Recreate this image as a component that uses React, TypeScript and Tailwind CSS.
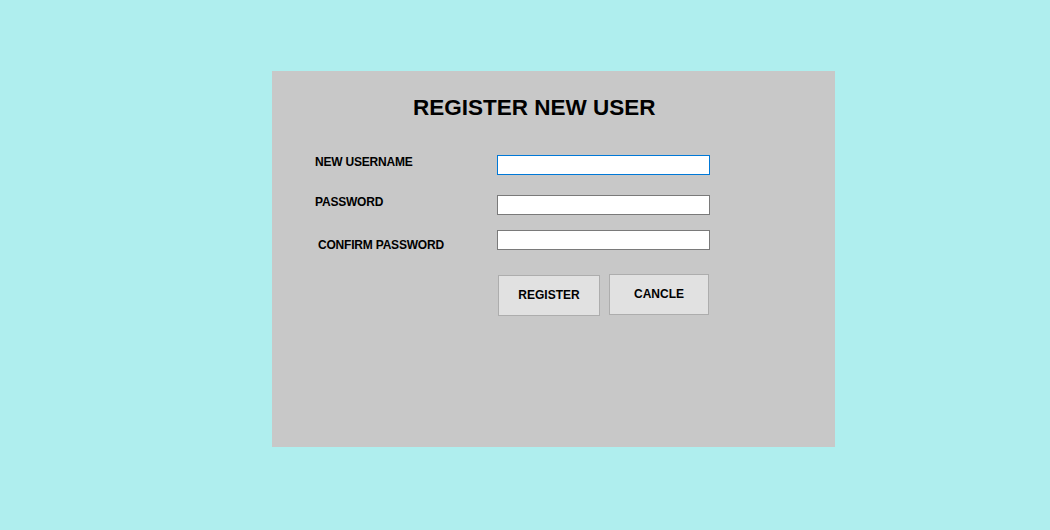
const ROWS = [
  { label: "NEW USERNAME", type: "text", focused: true, labelClass: "mt-[1px] ml-0", gap: "mt-[35px]" },
  { label: "PASSWORD", type: "password", focused: false, labelClass: "mt-[1px] ml-0", gap: "mt-[20px]" },
  { label: "CONFIRM PASSWORD", type: "password", focused: false, labelClass: "mt-[9px] ml-[3px]", gap: "mt-[15px]" },
];

export default function App() {
  return (
    <div
      className="w-full h-[530px] bg-[#afeeee] pt-[71px] pl-[272px]"
      style={{ fontFamily: '"Liberation Sans", Arial, sans-serif' }}
    >
      <div className="w-[563px] h-[376px] bg-[#c8c8c8] flex flex-col">
        <h1 className="mt-[26px] ml-[141px] text-[22.5px] leading-none font-bold text-black">
          REGISTER NEW USER
        </h1>

        {ROWS.map((row) => (
          <div key={row.label} className={`flex items-start ml-[43px] h-[20px] ${row.gap}`}>
            <div className="w-[182px]">
              <span className={`block text-[12px] leading-none font-bold text-black tracking-[-0.2px] ${row.labelClass}`}>
                {row.label}
              </span>
            </div>
            <input
              type={row.type}
              className={
                row.focused
                  ? "w-[213px] h-[20px] bg-white border border-[#0078d7] outline-none"
                  : "w-[213px] h-[20px] bg-white border border-[#7a7a7a] outline-none"
              }
            />
          </div>
        ))}

        <div className="flex items-start ml-[226px] mt-[24px]">
          <button className="mt-[1px] w-[102px] h-[41px] bg-[#e1e1e1] border border-[#adadad] text-[12px] font-bold text-black">
            REGISTER
          </button>
          <button className="ml-[9px] w-[100px] h-[41px] pb-[1px] bg-[#e1e1e1] border border-[#adadad] text-[12px] font-bold text-black">
            CANCLE
          </button>
        </div>
      </div>
    </div>
  );
}
